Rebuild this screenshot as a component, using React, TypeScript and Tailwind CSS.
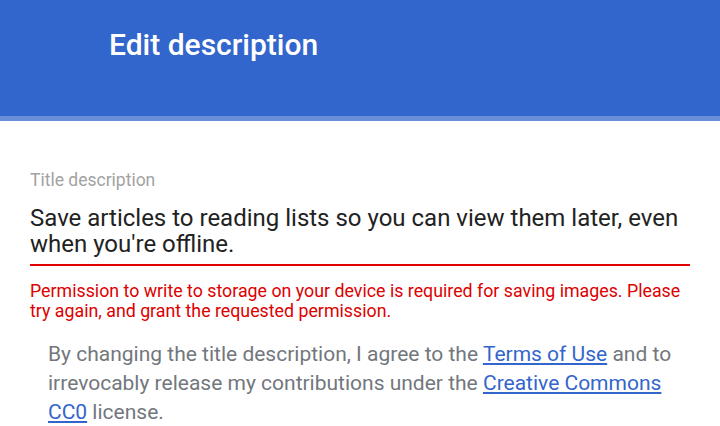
import React from "react";

export default function App() {
  return (
    <div className="w-[720px] h-[426px] overflow-hidden bg-white" style={{ fontFamily: "Roboto, 'Noto Sans', sans-serif" }}>
      <div className="h-[116px] bg-[#3366cc] pl-[109px] pt-[27px]">
        <h1 className="text-[30px] leading-[36px] font-medium text-white">Edit description</h1>
      </div>
      <div className="h-[5px] bg-[#6a8fd8]" />
      <div className="px-[30px] pt-[49px]">
        <div className="text-[17.5px] leading-[20px] text-[#a2a2a2]">Title description</div>
        <div className="mt-[15px] pb-[7px] border-b-2 border-[#e30000] text-[24px] leading-[26px] text-[#222222]">
          Save articles to reading lists so you can view them later, even when you're offline.
        </div>
        <div className="mt-[15px] text-[17.8px] leading-[20px] text-[#dd0000]">
          Permission to write to storage on your device is required for saving images. Please try again, and grant the requested permission.
        </div>
        <div className="mt-[19px] pl-[18px] text-[21px] leading-[29px] text-[#72777d]">
          By changing the title description, I agree to the{" "}
          <a className="text-[#3366cc] underline">Terms of Use</a> and to irrevocably release my contributions under the{" "}
          <a className="text-[#3366cc] underline">Creative Commons CC0</a> license.
        </div>
      </div>
    </div>
  );
}
